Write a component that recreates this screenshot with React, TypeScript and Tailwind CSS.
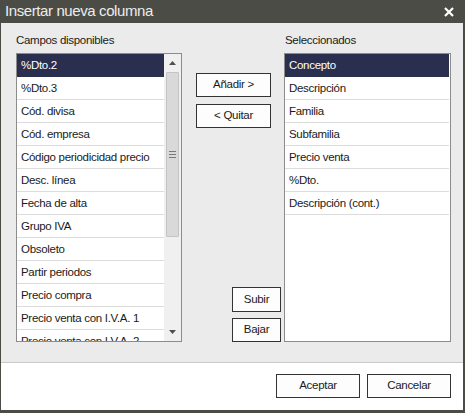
import React from 'react';

const available = [
  '%Dto.2',
  '%Dto.3',
  'Cód. divisa',
  'Cód. empresa',
  'Código periodicidad precio',
  'Desc. línea',
  'Fecha de alta',
  'Grupo IVA',
  'Obsoleto',
  'Partir periodos',
  'Precio compra',
  'Precio venta con I.V.A. 1',
  'Precio venta con I.V.A. 2',
];

const selected = [
  'Concepto',
  'Descripción',
  'Familia',
  'Subfamilia',
  'Precio venta',
  '%Dto.',
  'Descripción (cont.)',
];

function Row({ label, active }: { label: string; active?: boolean }) {
  return (
    <div
      className={
        active
          ? 'h-[23px] shrink-0 border-b border-[#2a2f4f] bg-[#2a2f4f] pl-[4px] leading-[22px] text-white'
          : 'h-[23px] shrink-0 border-b border-[#dcdcdc] pl-[4px] leading-[22px] text-[#1a1a1a]'
      }
    >
      {label}
    </div>
  );
}

function Btn({ label, className }: { label: string; className: string }) {
  return (
    <div
      className={
        'flex items-center justify-center border border-[#333333] bg-[#fdfdfd] text-[#1a1a1a] ' +
        className
      }
    >
      {label}
    </div>
  );
}

function ScrollBar() {
  return (
    <div className="flex w-[17px] shrink-0 flex-col bg-[#f0f0f0]">
      <div className="flex h-[18px] items-center justify-center">
        <svg width="7" height="4" viewBox="0 0 7 4">
          <path d="M3.5 0 L7 4 L0 4 Z" fill="#505050" />
        </svg>
      </div>
      <div className="mx-[2px] flex h-[165px] items-center justify-center rounded-[1px] border border-[#c4c4c4] bg-[#d9d9d9]">
        <div className="flex flex-col gap-[2px]">
          <div className="h-px w-[7px] bg-[#7a7a7a]" />
          <div className="h-px w-[7px] bg-[#7a7a7a]" />
          <div className="h-px w-[7px] bg-[#7a7a7a]" />
        </div>
      </div>
      <div className="flex-1" />
      <div className="flex h-[18px] items-center justify-center">
        <svg width="7" height="4" viewBox="0 0 7 4">
          <path d="M0 0 L7 0 L3.5 4 Z" fill="#505050" />
        </svg>
      </div>
    </div>
  );
}

export default function App() {
  return (
    <div
      className="flex h-[413px] w-[465px] flex-col bg-[#4c4c47] pb-[3px] pl-px pr-[2px] text-[11.5px] tracking-[-0.3px]"
      style={{ fontFamily: '"Liberation Sans", Arial, sans-serif' }}
    >
      {/* Title bar */}
      <div className="flex h-[23px] shrink-0 items-center justify-between pl-[4px] pr-[9px]">
        <span className="text-[15px] tracking-[-0.4px] text-[#ececec]">Insertar nueva columna</span>
        <svg width="10" height="10" viewBox="0 0 10 10">
          <path d="M1 1 L9 9 M9 1 L1 9" stroke="#ffffff" strokeWidth="2.2" />
        </svg>
      </div>

      {/* Content */}
      <div className="flex h-[339px] shrink-0 bg-[#ebebeb] pl-[15px] pt-[10px]">
        <div className="flex w-[166px] flex-col">
          <div className="h-[15px] leading-[15px] text-[#1a1a1a]">Campos disponibles</div>
          <div className="mt-[5px] flex h-[289px] border border-[#8c8c8c] bg-white">
            <div className="flex flex-1 flex-col overflow-hidden">
              {available.map((a, i) => (
                <Row key={a} label={a} active={i === 0} />
              ))}
            </div>
            <ScrollBar />
          </div>
        </div>

        <div className="flex w-[102px] flex-col">
          <Btn label="Añadir >" className="ml-[14px] mt-[40px] h-[24px] w-[75px]" />
          <Btn label="< Quitar" className="ml-[14px] mt-[7px] h-[24px] w-[75px]" />
          <div className="flex-1" />
          <Btn label="Subir" className="ml-[50px] h-[25px] w-[49px]" />
          <Btn label="Bajar" className="mb-[20px] ml-[50px] mt-[6px] h-[24px] w-[49px]" />
        </div>

        <div className="flex w-[167px] flex-col">
          <div className="h-[15px] pl-px leading-[15px] text-[#1a1a1a]">Seleccionados</div>
          <div className="mt-[5px] flex h-[289px] flex-col overflow-hidden border border-[#8c8c8c] bg-white pr-px">
            {selected.map((s, i) => (
              <Row key={s} label={s} active={i === 0} />
            ))}
          </div>
        </div>
      </div>

      {/* Footer */}
      <div className="flex flex-1 justify-end gap-[7px] border-t border-[#c9c9c9] bg-white pr-[12px] pt-[11px]">
        <Btn label="Aceptar" className="h-[24px] w-[84px]" />
        <Btn label="Cancelar" className="h-[24px] w-[84px]" />
      </div>
    </div>
  );
}
